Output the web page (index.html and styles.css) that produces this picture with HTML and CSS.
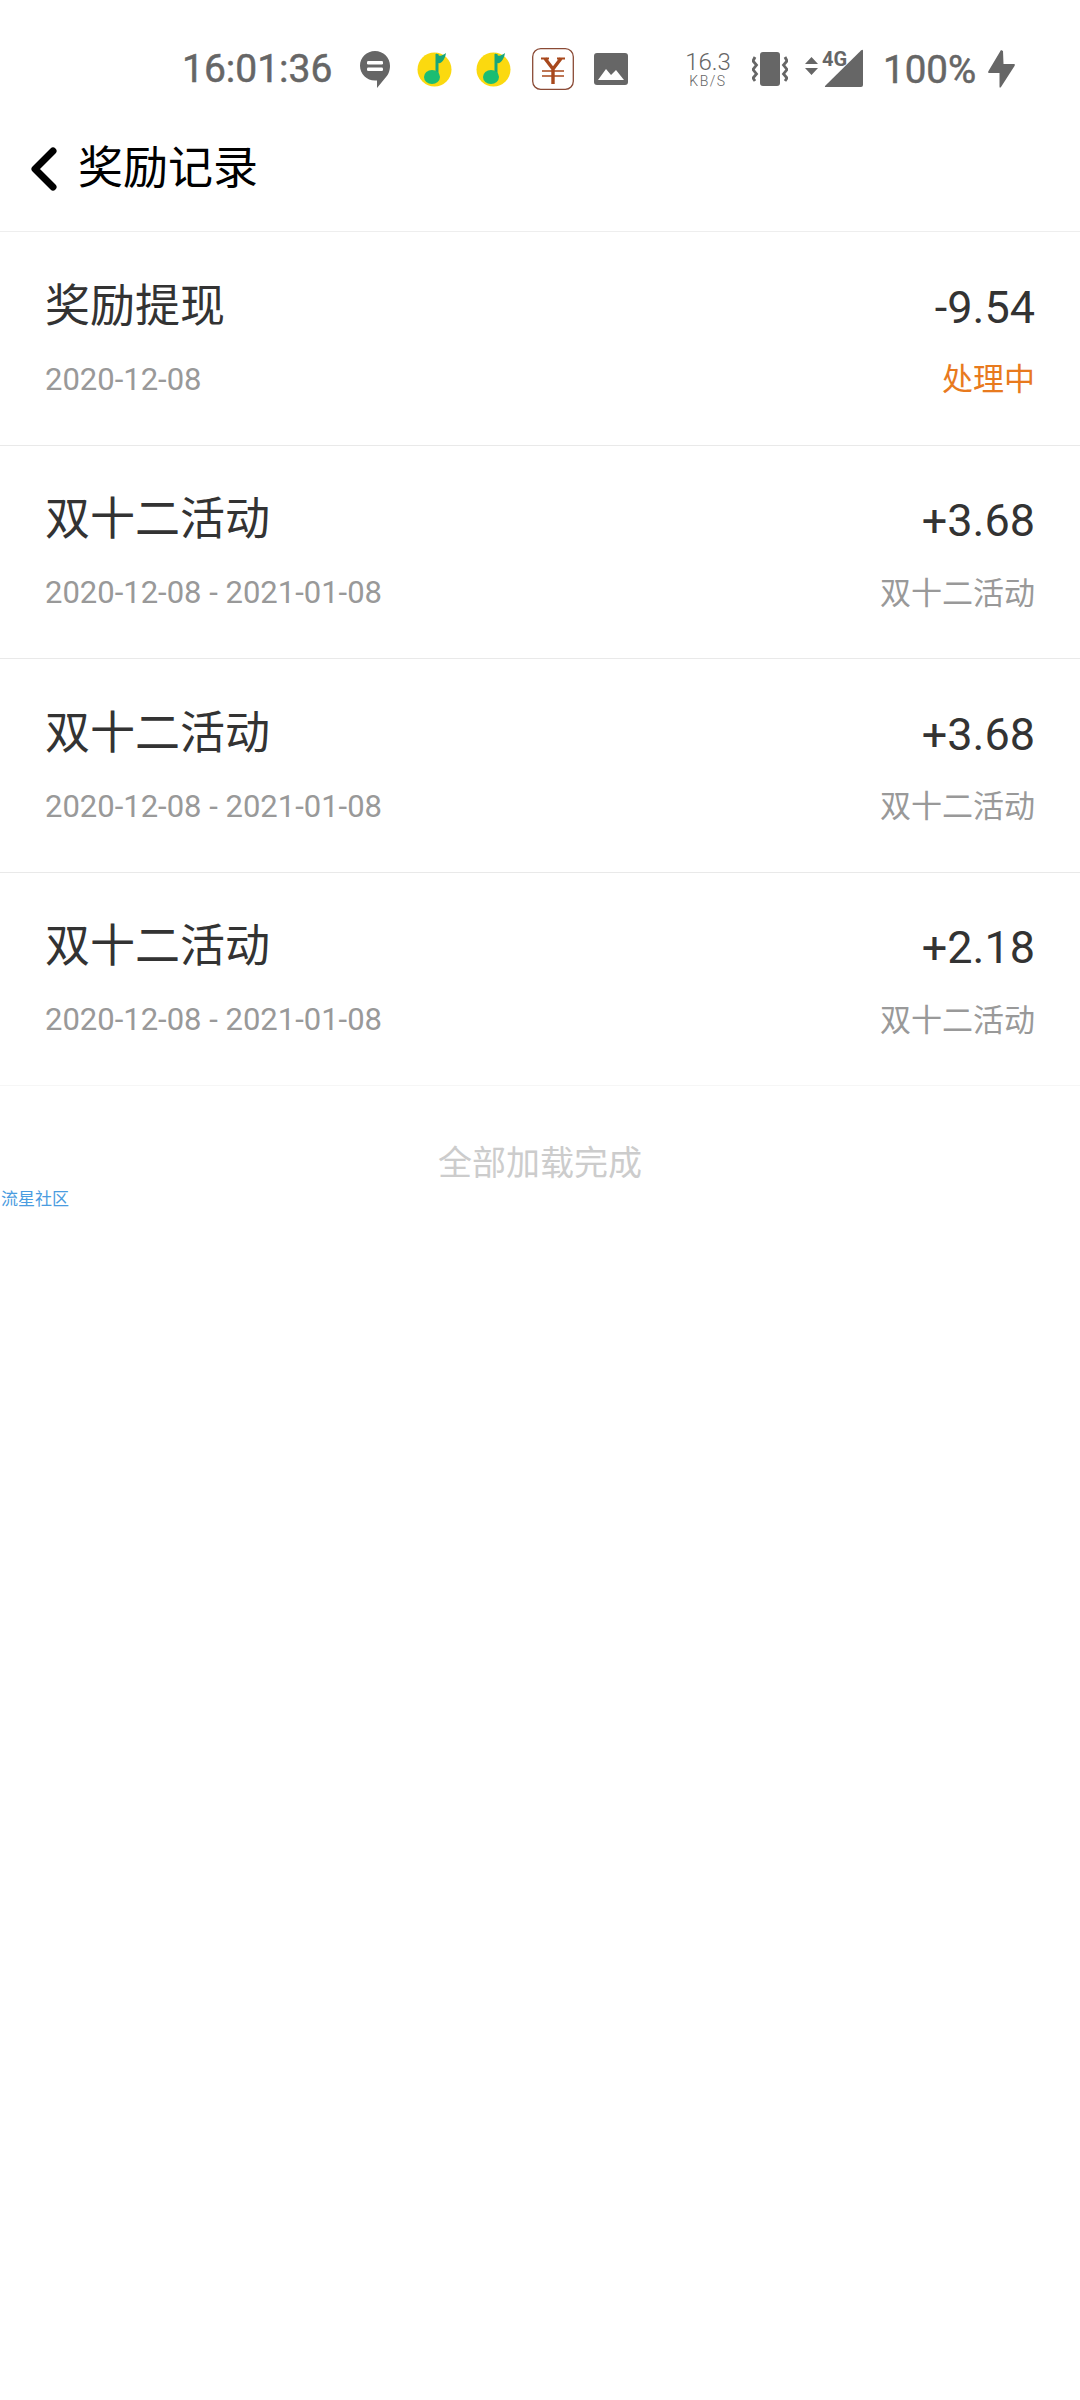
FILE: index.html
```html
<!DOCTYPE html>
<html lang="zh-CN">

<head>
    <meta charset="utf-8" />
    <title>奖励记录</title>
    <link rel="stylesheet" href="styles.css">
</head>

<body>
    <!-- 状态栏 -->
    <div class="status-bar">
        <span class="clock">16:01:36</span>
        <svg class="icon-chat" width="30" height="37" viewBox="0 0 30 37">
            <path d="M15 0C6.7 0 0 6.6 0 14.800S6.700 29.600 15 29.600H17V37L25 27.200C28 24.600 30 20 30 14.800 30 6.600 23.300 0 15 0Z" fill="#666" />
            <rect x="7" y="10" width="16" height="3.400" rx="1.200" fill="#fff" />
            <rect x="7" y="16.500" width="16" height="3.400" rx="1.200" fill="#fff" />
        </svg>
        <svg class="icon-music" width="35" height="35" viewBox="0 0 35 35">
            <circle cx="17.500" cy="17.500" r="17" fill="#fbd90f" />
            <path d="M20 2V23" stroke="#17a67c" stroke-width="3" fill="none" />
            <path d="M19 1C22 6 26 3 29 1 28 7 25 12 21 11Z" fill="#17a67c" />
            <ellipse cx="15" cy="25" rx="8" ry="7" fill="#1bbd72" />
        </svg>
        <svg class="icon-music music-second" width="35" height="35" viewBox="0 0 35 35">
            <circle cx="17.500" cy="17.500" r="17" fill="#fbd90f" />
            <path d="M20 2V23" stroke="#17a67c" stroke-width="3" fill="none" />
            <path d="M19 1C22 6 26 3 29 1 28 7 25 12 21 11Z" fill="#17a67c" />
            <ellipse cx="15" cy="25" rx="8" ry="7" fill="#1bbd72" />
        </svg>
        <svg class="icon-yen" width="42" height="42" viewBox="0 0 42 42">
            <rect x="0.700" y="0.700" width="40.600" height="40.600" rx="8" fill="#fff" stroke="#8a4a35" stroke-width="1.300" />
            <path d="M9 10.500H17M25 10.500H33" fill="none" stroke="#a8481c" stroke-width="2" />
            <path d="M13 10.500L21 21 29 10.500M21 21V36" fill="none" stroke="#a8481c" stroke-width="3.400" />
            <path d="M10 23H32M10 28H32" fill="none" stroke="#a8481c" stroke-width="1.500" />
        </svg>
        <svg class="icon-image" width="34" height="32" viewBox="0 0 34 32">
            <rect width="34" height="32" rx="3" fill="#666" />
            <path d="M4 27L12 16 17 22 22 17 30 27Z" fill="#fff" />
        </svg>
        <div class="net-speed">
            <span class="speed-num">16.3</span>
            <span class="speed-unit">KB/S</span>
        </div>
        <svg class="icon-vibrate" width="36" height="34" viewBox="0 0 36 34">
            <rect x="8" y="0" width="20" height="34" rx="3" fill="#666" />
            <path d="M3 5L1 9 4.500 13 1 17.500 4.500 22 1 26 3 29M33 5L35 9 31.500 13 35 17.500 31.500 22 35 26 33 29" fill="none" stroke="#666" stroke-width="2.800" />
        </svg>
        <svg class="icon-signal" width="58" height="44" viewBox="0 -6 58 44">
            <path d="M0 14L6.500 7 13 14ZM0 18H13L6.500 25Z" fill="#666" />
            <path d="M58 1V35Q58 37 56 37H21Q19 37 20.500 35.500L56 .5Q58-1 58 1Z" fill="#666" />
            <text x="17" y="16" class="signal-text">4G</text>
        </svg>
        <span class="battery">100%</span>
        <svg class="icon-bolt" width="27" height="38" viewBox="0 0 27 38">
            <path d="M13 0L15 1 15.500 14H26Q27.500 14 26.500 16L13 37Q11.500 38.500 11.500 36.500V23H1Q-.5 23 .5 21Z" fill="#666" />
        </svg>
    </div>

    <!-- 标题栏 -->
    <div class="nav-bar">
        <svg class="icon-back" width="28" height="44" viewBox="0 0 28 44">
            <path d="M23 4L5 22 23 40" fill="none" stroke="#000" stroke-width="7" stroke-linejoin="round" stroke-linecap="round" />
        </svg>
        <span class="nav-title">奖励记录</span>
    </div>

    <!-- 奖励列表 -->
    <div class="record-list">
        <div class="record-row">
            <div class="row-line">
                <span class="record-name">奖励提现</span>
                <span class="record-amount">-9.54</span>
            </div>
            <div class="row-line row-sub">
                <span class="record-date">2020-12-08</span>
                <span class="record-tag tag-orange">处理中</span>
            </div>
        </div>
        <div class="record-row">
            <div class="row-line">
                <span class="record-name">双十二活动</span>
                <span class="record-amount">+3.68</span>
            </div>
            <div class="row-line row-sub">
                <span class="record-date">2020-12-08 - 2021-01-08</span>
                <span class="record-tag">双十二活动</span>
            </div>
        </div>
        <div class="record-row">
            <div class="row-line">
                <span class="record-name">双十二活动</span>
                <span class="record-amount">+3.68</span>
            </div>
            <div class="row-line row-sub">
                <span class="record-date">2020-12-08 - 2021-01-08</span>
                <span class="record-tag">双十二活动</span>
            </div>
        </div>
        <div class="record-row row-last">
            <div class="row-line">
                <span class="record-name">双十二活动</span>
                <span class="record-amount">+2.18</span>
            </div>
            <div class="row-line row-sub">
                <span class="record-date">2020-12-08 - 2021-01-08</span>
                <span class="record-tag">双十二活动</span>
            </div>
        </div>
    </div>

    <p class="load-done">全部加载完成</p>
    <p class="watermark">流星社区</p>
</body>

</html>
```

FILE: styles.css
```css
* {
    box-sizing: border-box;
}

body {
    margin: 0;
    background-color: #fff;
    font-family: Roboto, "Noto Sans CJK SC", sans-serif;
}

.status-bar {
    display: flex;
    align-items: center;
    height: 136px;
    padding-top: 2px;
    padding-left: 182px;
    color: #666;
}

.clock {
    width: 178px;
    font-size: 39px;
    -webkit-text-stroke: 0.500px #666;
}

.icon-music {
    margin-left: 27px;
}

.music-second {
    margin-left: 24px;
}

.icon-yen {
    margin-left: 21px;
}

.icon-image {
    margin-left: 20px;
}

.net-speed {
    display: flex;
    flex-direction: column;
    align-items: center;
    width: 44px;
    margin-left: 58px;
    font-weight: 300;
}

.speed-num {
    font-size: 24px;
    line-height: 24px;
}

.speed-unit {
    font-size: 14px;
    line-height: 14px;
    letter-spacing: 1.500px;
}

.icon-vibrate {
    margin-left: 22px;
}

.icon-signal {
    margin-left: 17px;
    margin-top: -6px;
}

.signal-text {
    font-size: 20px;
    font-weight: 700;
    fill: #666;
}

.battery {
    margin-left: 20px;
    font-size: 38.500px;
    -webkit-text-stroke: 0.500px #666;
}

.icon-bolt {
    margin-left: 12px;
}

.nav-bar {
    display: flex;
    align-items: center;
    height: 96px;
    padding: 0 0 30px 30px;
    border-bottom: 1px solid #eee;
}

.icon-back {
    margin-bottom: -1px;
}

.nav-title {
    margin-left: 20px;
    margin-bottom: 8px;
    font-size: 45px;
    color: #000;
}

.record-row {
    height: 213.500px;
    padding: 45px 45px 0;
    border-bottom: 1px solid #e9e9e9;
}

.row-last {
    border-bottom-color: #f6f6f6;
}

.row-line {
    display: flex;
    justify-content: space-between;
    align-items: center;
    height: 56px;
}

.row-sub {
    height: 44px;
    margin-top: 25px;
}

.record-name {
    margin-bottom: 6px;
    font-size: 45px;
    color: #333;
}

.record-amount {
    margin-top: 4px;
    font-size: 45px;
    color: #333;
}

.record-date {
    margin-bottom: 2px;
    font-size: 31px;
    color: #999;
}

.record-tag {
    margin-bottom: 7px;
    font-size: 31px;
    color: #999;
}

.tag-orange {
    color: #e87a1e;
}

.load-done {
    margin: 53px 0 0;
    font-size: 34px;
    line-height: 48px;
    text-align: center;
    color: #ccc;
}

.watermark {
    margin: 0;
    padding-left: 1px;
    font-size: 17px;
    line-height: 24px;
    color: #4a9ce0;
}
```
